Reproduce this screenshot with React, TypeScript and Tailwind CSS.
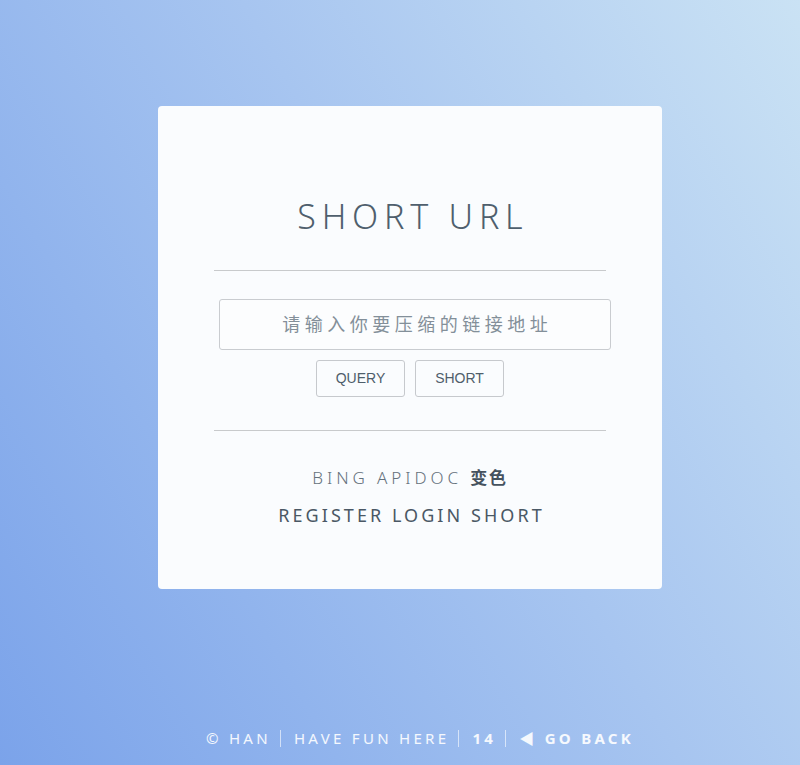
import React from "react";

const sans = "font-['Noto_Sans','Noto_Sans_CJK_SC',sans-serif]";

function Sep() {
  return <span className="ml-[9px] mr-[13px] inline-block h-[17px] w-px bg-white/60" />;
}

export default function App() {
  return (
    <div
      className={`relative flex h-[765px] w-full flex-col items-center bg-[linear-gradient(60deg,#7ba3ea,#a7c5f0_55%,#cae2f4)] ${sans}`}
    >
      <div className="ml-[20px] mt-[106px] flex h-[483px] w-[504px] flex-col items-center rounded-[4px] bg-[#fafcfe]">
        <h1 className="mt-[88px] pl-[0.17em] text-[34px] font-light leading-[44px] tracking-[0.17em] text-[#4f5f6d]">
          SHORT URL
        </h1>

        <div className="mt-[32px] h-px w-[392px] bg-[#c8cacc]" />

        <div className="ml-[10px] mt-[28px] flex h-[51px] w-[392px] items-center justify-center rounded-[3px] border border-[#c9ccd0] bg-white/40">
          <span className="pl-[0.25em] text-[18px] tracking-[0.25em] text-[#838f99]">
            请输入你要压缩的链接地址
          </span>
        </div>

        <div className="mt-[10px] flex gap-[10px]">
          <button className="h-[37px] w-[89px] rounded-[3px] border border-[#c6c9cd] font-['Liberation_Sans',sans-serif] text-[14px] text-[#4f5e6b]">
            QUERY
          </button>
          <button className="h-[37px] w-[89px] rounded-[3px] border border-[#c6c9cd] font-['Liberation_Sans',sans-serif] text-[14px] text-[#4f5e6b]">
            SHORT
          </button>
        </div>

        <div className="mt-[33px] h-px w-[392px] bg-[#c8cacc]" />

        <div className="mt-[34px] text-[17px] font-light leading-[26px] tracking-[0.23em] text-[#65717c]">
          BING APIDOC <span className="font-bold tracking-[0.1em] text-[#45525e]">变色</span>
        </div>
        <div className="mt-[11px] pl-[0.17em] text-[18px] leading-[26px] tracking-[0.17em] text-[#4a5865]">
          REGISTER LOGIN SHORT
        </div>
      </div>

      <div className="ml-[40px] mt-auto mb-[17px] flex items-center text-[15px] leading-[20px] tracking-[0.22em] text-white/90">
        <span>© HAN</span>
        <Sep />
        <span>HAVE FUN HERE</span>
        <Sep />
        <span className="font-bold">14</span>
        <Sep />
        <span className="font-bold">◀ GO BACK</span>
      </div>
    </div>
  );
}
